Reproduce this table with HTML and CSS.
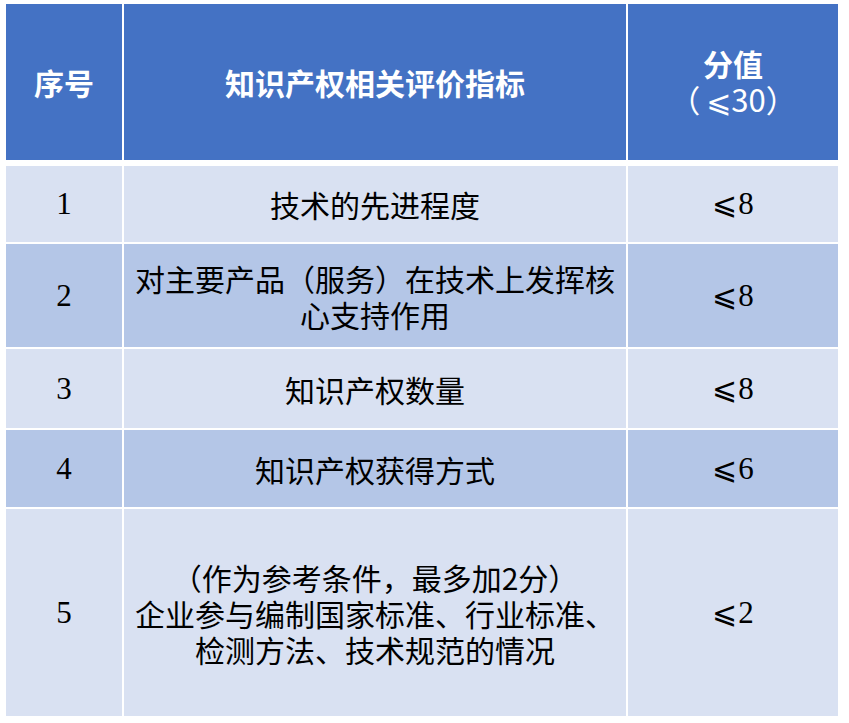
FILE: index.html
```html
<!DOCTYPE html>
<html lang="zh-CN">
<head>
<meta charset="utf-8">
<title>知识产权相关评价指标</title>
<link rel="stylesheet" href="styles.css">
</head>
<body>
<div class="table">
  <div class="cell head"><span class="in">序号</span></div>
  <div class="cell head"><span class="in">知识产权相关评价指标</span></div>
  <div class="cell head"><span class="in">分值<br><span class="sub">（<span class="le">⩽</span>30）</span></span></div>

  <div class="cell light num"><span class="in">1</span></div>
  <div class="cell light txt"><span class="in">技术的先进程度</span></div>
  <div class="cell light num"><span class="in"><span class="le">⩽</span>8</span></div>

  <div class="cell dark num"><span class="in">2</span></div>
  <div class="cell dark txt"><span class="in">对主要产品（服务）在技术上发挥核<br>心支持作用</span></div>
  <div class="cell dark num"><span class="in"><span class="le">⩽</span>8</span></div>

  <div class="cell light num"><span class="in">3</span></div>
  <div class="cell light txt"><span class="in">知识产权数量</span></div>
  <div class="cell light num"><span class="in"><span class="le">⩽</span>8</span></div>

  <div class="cell dark num"><span class="in">4</span></div>
  <div class="cell dark txt"><span class="in">知识产权获得方式</span></div>
  <div class="cell dark num"><span class="in"><span class="le">⩽</span>6</span></div>

  <div class="cell light num"><span class="in">5</span></div>
  <div class="cell light txt"><span class="in">（作为参考条件，最多加2分）<br>企业参与编制国家标准、行业标准、<br>检测方法、技术规范的情况</span></div>
  <div class="cell light num"><span class="in"><span class="le">⩽</span>2</span></div>
</div>
</body>
</html>
```
FILE: styles.css
```css
html, body {
  margin: 0;
  padding: 0;
  background: #ffffff;
}

body {
  padding: 4px 0 0 6px;
}

.table {
  display: grid;
  grid-template-columns: 116px 502px 210px;
  grid-template-rows: 160px 76px 103px 79px 77px 207px;
  gap: 2px;
  width: 832px;
}

.cell {
  display: flex;
  align-items: center;
  justify-content: center;
  text-align: center;
  color: #000000;
  font-family: "Noto Sans CJK SC", sans-serif;
  font-size: 30px;
}

.in {
  display: block;
  line-height: 36px;
}

.head {
  background: #4472c4;
  color: #ffffff;
  font-weight: bold;
  margin-bottom: 4px;
}

.sub {
  font-weight: normal;
  font-size: 31px;
}

.head .le {
  font-family: "DejaVu Sans", sans-serif;
  font-size: 30px;
  margin-left: 6px;
}

.light {
  background: #d9e1f2;
}

.dark {
  background: #b4c6e7;
}

.txt {
  font-weight: normal;
}

.num {
  font-family: "Liberation Serif", "DejaVu Serif", serif;
  font-size: 31px;
}

.num .le {
  font-family: "DejaVu Serif", serif;
  font-size: 30px;
  margin-right: 1px;
}
```
